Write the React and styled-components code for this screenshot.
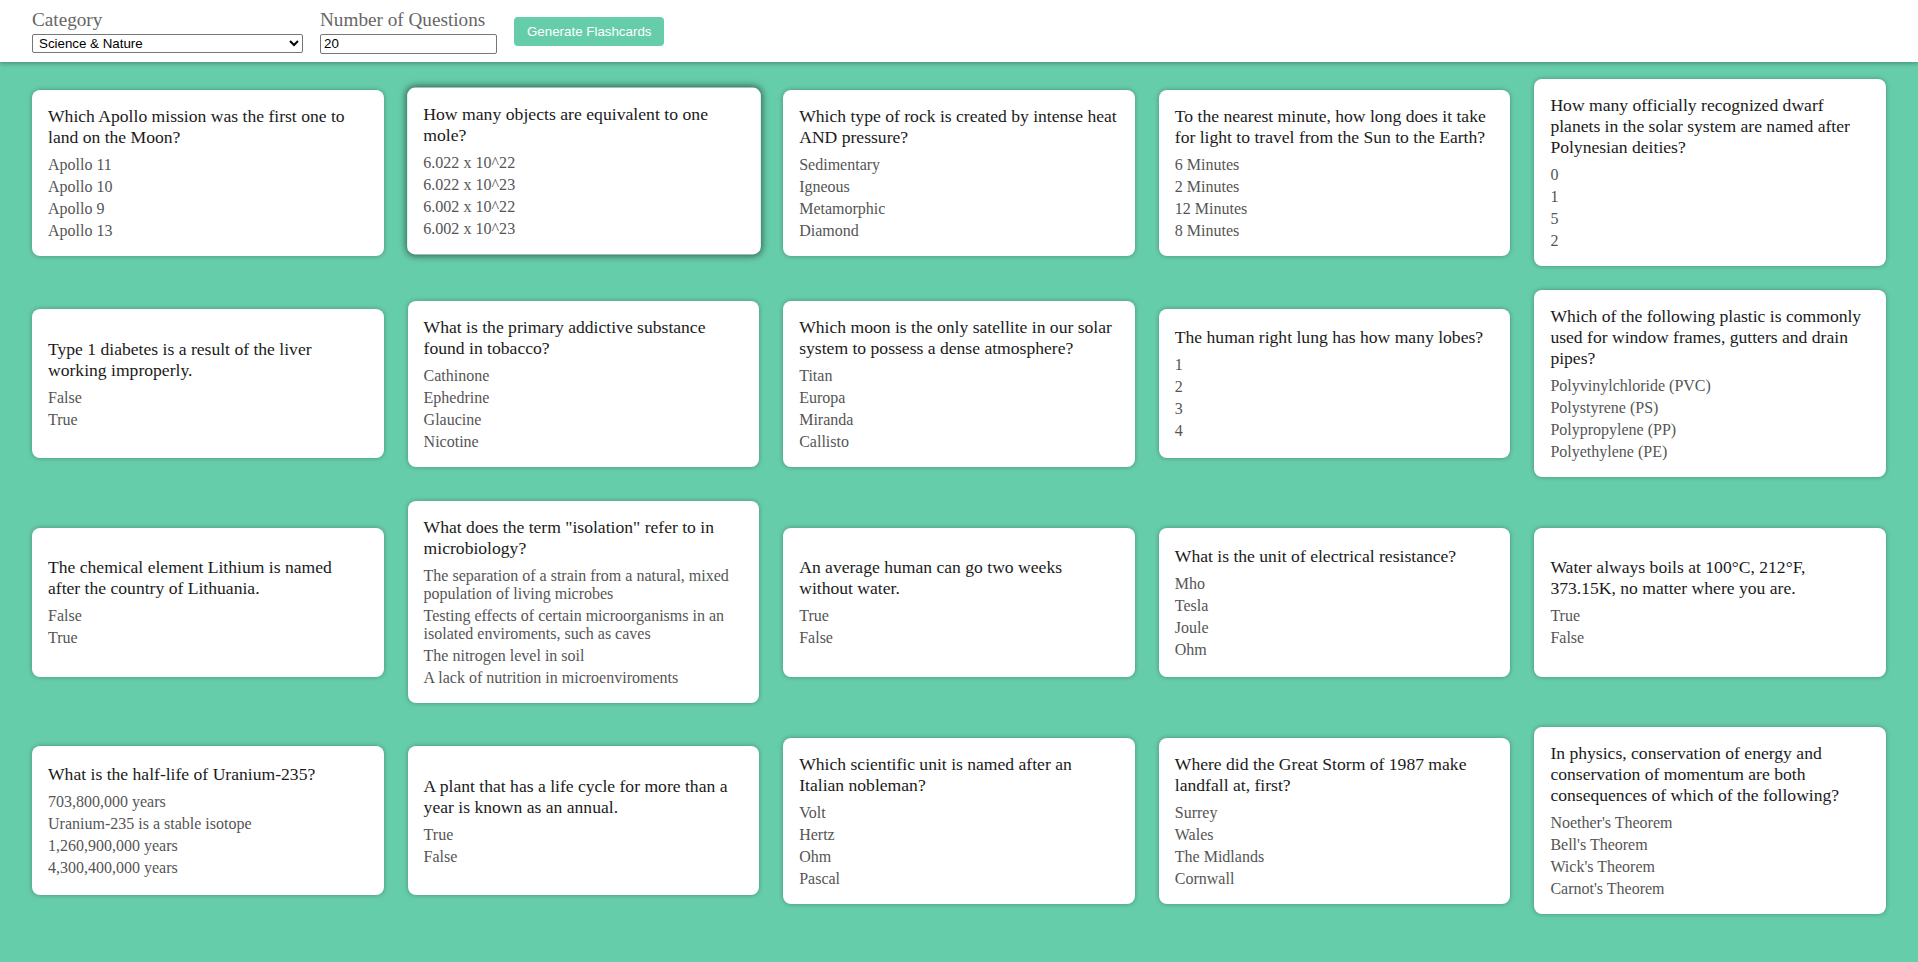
import React from 'react';
import styled, { createGlobalStyle } from 'styled-components';

const GlobalStyle = createGlobalStyle`
  html, body, #root {
    margin: 0;
    padding: 0;
  }
  body {
    background: #66cdaa;
    font-family: 'Liberation Serif', 'Times New Roman', serif;
    min-height: 100vh;
  }
`;

const Header = styled.header`
  box-sizing: border-box;
  height: 62px;
  padding: 0 32px;
  background: #fff;
  display: flex;
  align-items: center;
  gap: 17px;
  box-shadow: 0 2px 4px rgba(0, 0, 0, 0.25);
  position: relative;
`;

const Field = styled.div`
  display: flex;
  flex-direction: column;
  gap: 3px;
`;

const Label = styled.label`
  font-family: 'Liberation Serif', 'Times New Roman', serif;
  font-size: 19.2px;
  line-height: 22px;
  color: #666;
`;

const Select = styled.select`
  box-sizing: border-box;
  width: 271px;
  height: 19px;
  padding: 0 0 0 2px;
  border: 1px solid #767676;
  border-radius: 2px;
  background: #fff;
  color: #000;
  font-family: 'Liberation Sans', Arial, sans-serif;
  font-size: 13.33px;
`;

const NumberInput = styled.input`
  box-sizing: border-box;
  width: 177px;
  height: 20px;
  padding: 1px 3px;
  border: 1px solid #767676;
  border-radius: 2px;
  color: #000;
  font-family: 'Liberation Sans', Arial, sans-serif;
  font-size: 13.33px;
`;

const Button = styled.button`
  height: 29px;
  padding: 0 13px;
  border: none;
  border-radius: 4px;
  background: #66cdaa;
  color: #fff;
  font-family: 'Liberation Sans', Arial, sans-serif;
  font-size: 13.33px;
  cursor: pointer;
`;

const Grid = styled.main`
  display: grid;
  grid-template-columns: repeat(5, 1fr);
  align-items: center;
  gap: 24px;
  padding: 17px 32px 32px;
`;

const Card = styled.div`
  box-sizing: border-box;
  min-height: 149px;
  display: flex;
  flex-direction: column;
  justify-content: center;
  background: #fff;
  border-radius: 8px;
  padding: 16px;
  box-shadow: ${p => (p.$raised ? '0 0 7px 1px rgba(0, 0, 0, 0.55)' : '0 0 5px rgba(0, 0, 0, 0.3)')};
  transform: ${p => (p.$raised ? 'translateY(-2px) scale(1.005)' : 'none')};
  transition: box-shadow 0.2s, transform 0.2s;
  &:hover {
    box-shadow: 0 0 7px 1px rgba(0, 0, 0, 0.55);
  }
`;

const Question = styled.div`
  font-size: 17.6px;
  color: #1a1a1a;
  margin-bottom: 8px;
`;

const Answers = styled.div`
  display: flex;
  flex-direction: column;
  gap: 4px;
`;

const Answer = styled.div`
  font-size: 16px;
  color: #555;
`;

const cards = [
  ['Which Apollo mission was the first one to land on the Moon?', ['Apollo 11', 'Apollo 10', 'Apollo 9', 'Apollo 13']],
  ['How many objects are equivalent to one mole?', ['6.022 x 10^22', '6.022 x 10^23', '6.002 x 10^22', '6.002 x 10^23']],
  ['Which type of rock is created by intense heat AND pressure?', ['Sedimentary', 'Igneous', 'Metamorphic', 'Diamond']],
  ['To the nearest minute, how long does it take for light to travel from the Sun to the Earth?', ['6 Minutes', '2 Minutes', '12 Minutes', '8 Minutes']],
  ['How many officially recognized dwarf planets in the solar system are named after Polynesian deities?', ['0', '1', '5', '2']],
  ['Type 1 diabetes is a result of the liver working improperly.', ['False', 'True']],
  ['What is the primary addictive substance found in tobacco?', ['Cathinone', 'Ephedrine', 'Glaucine', 'Nicotine']],
  ['Which moon is the only satellite in our solar system to possess a dense atmosphere?', ['Titan', 'Europa', 'Miranda', 'Callisto']],
  ['The human right lung has how many lobes?', ['1', '2', '3', '4']],
  ['Which of the following plastic is commonly used for window frames, gutters and drain pipes?', ['Polyvinylchloride (PVC)', 'Polystyrene (PS)', 'Polypropylene (PP)', 'Polyethylene (PE)']],
  ['The chemical element Lithium is named after the country of Lithuania.', ['False', 'True']],
  ['What does the term "isolation" refer to in microbiology?', [
    'The separation of a strain from a natural, mixed population of living microbes',
    'Testing effects of certain microorganisms in an isolated enviroments, such as caves',
    'The nitrogen level in soil',
    'A lack of nutrition in microenviroments',
  ]],
  ['An average human can go two weeks without water.', ['True', 'False']],
  ['What is the unit of electrical resistance?', ['Mho', 'Tesla', 'Joule', 'Ohm']],
  ['Water always boils at 100°C, 212°F, 373.15K, no matter where you are.', ['True', 'False']],
  ['What is the half-life of Uranium-235?', ['703,800,000 years', 'Uranium-235 is a stable isotope', '1,260,900,000 years', '4,300,400,000 years']],
  ['A plant that has a life cycle for more than a year is known as an annual.', ['True', 'False']],
  ['Which scientific unit is named after an Italian nobleman?', ['Volt', 'Hertz', 'Ohm', 'Pascal']],
  ['Where did the Great Storm of 1987 make landfall at, first?', ['Surrey', 'Wales', 'The Midlands', 'Cornwall']],
  ['In physics, conservation of energy and conservation of momentum are both consequences of which of the following?', ["Noether's Theorem", "Bell's Theorem", "Wick's Theorem", "Carnot's Theorem"]],
];

export default function App() {
  return (
    <>
      <GlobalStyle />
      <Header>
        <Field>
          <Label htmlFor="category">Category</Label>
          <Select id="category" defaultValue="17">
            <option value="9">General Knowledge</option>
            <option value="17">Science &amp; Nature</option>
            <option value="18">Science: Computers</option>
          </Select>
        </Field>
        <Field>
          <Label htmlFor="amount">Number of Questions</Label>
          <NumberInput id="amount" type="number" defaultValue="20" />
        </Field>
        <Button>Generate Flashcards</Button>
      </Header>
      <Grid>
        {cards.map(([q, answers], i) => (
          <Card key={i} $raised={i === 1}>
            <Question>{q}</Question>
            <Answers>
              {answers.map(a => (
                <Answer key={a}>{a}</Answer>
              ))}
            </Answers>
          </Card>
        ))}
      </Grid>
    </>
  );
}
